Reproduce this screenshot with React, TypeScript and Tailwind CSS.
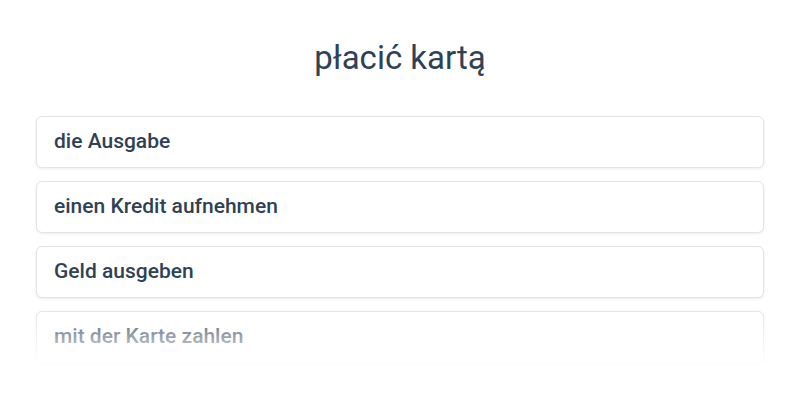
const options = [
  "die Ausgabe",
  "einen Kredit aufnehmen",
  "Geld ausgeben",
  "mit der Karte zahlen",
];

export default function App() {
  return (
    <div className="h-[400px] w-[800px] bg-white font-['Roboto',sans-serif] text-[#2f4255]">
      <h1 className="pt-[38px] text-center text-[33px] leading-[40px]">płacić kartą</h1>
      <div className="relative mt-[38px] flex flex-col gap-[13px] px-9">
        {options.map((opt) => (
          <div
            key={opt}
            className="flex h-[52px] items-center rounded-md border border-[#e3e3e3] bg-white px-[17px] text-[21px] font-medium shadow-[0_1px_3px_rgba(0,0,0,0.08)]"
          >
            {opt}
          </div>
        ))}
        <div className="pointer-events-none absolute bottom-[-4px] left-0 right-0 h-[62px] bg-gradient-to-b from-transparent to-white" />
      </div>
    </div>
  );
}
